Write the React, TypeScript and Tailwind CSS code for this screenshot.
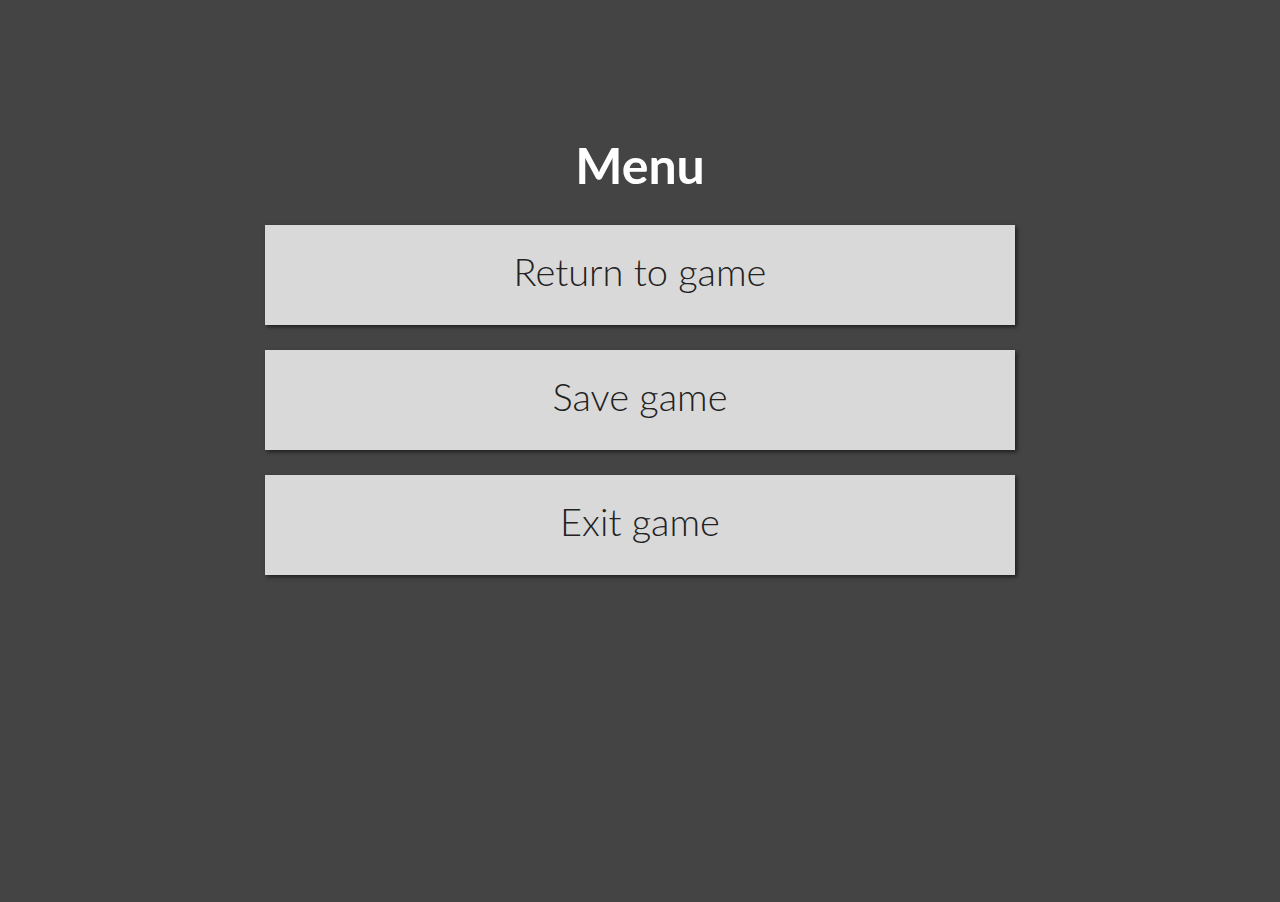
export default function App() {
  const items = ["Return to game", "Save game", "Exit game"];
  return (
    <div className="min-h-[902px] w-full bg-[#444444] font-['Lato',sans-serif]">
      <div className="mx-auto flex w-[750px] flex-col items-center pt-[134px]">
        <h1 className="h-[62px] text-[50px] font-bold leading-[62px] text-white">Menu</h1>
        <div className="mt-[29px] flex w-full flex-col gap-[25px]">
          {items.map((label) => (
            <button
              key={label}
              className="h-[100px] w-full bg-[#d9d9d9] pb-[7px] text-[38px] font-light text-[#222222] shadow-[2px_2px_4px_rgba(0,0,0,0.55)]"
            >
              {label}
            </button>
          ))}
        </div>
      </div>
    </div>
  );
}
